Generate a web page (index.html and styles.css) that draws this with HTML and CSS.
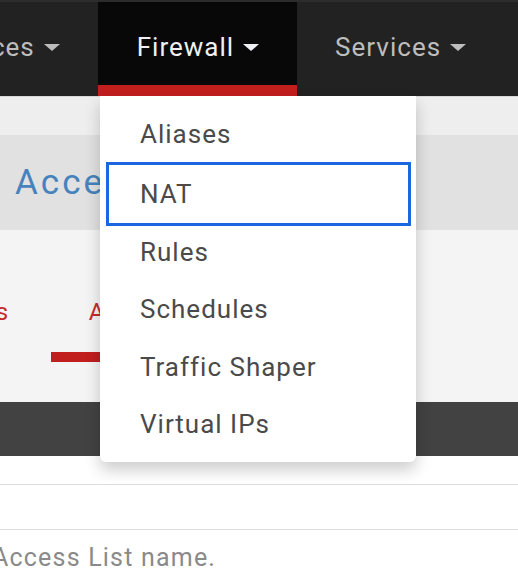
FILE: index.html
```html
<!DOCTYPE html>
<html lang="en">

<head>
    <meta charset="UTF-8">
    <title>Firewall</title>
    <link rel="stylesheet" href="styles.css">
</head>

<body>
    <div id="nav">
        <ul>
            <li class="first"><a href="javascript:;">Interfaces <b class="caret"></b></a></li>
            <li class="active"><a href="javascript:;">Firewall <b class="caret"></b></a></li>
            <li><a href="javascript:;">Services <b class="caret"></b></a></li>
        </ul>
    </div>

    <div id="content">
        <div class="gap"></div>
        <div class="heading">
            <h1>Access Lists</h1>
        </div>
        <div class="tabs">
            <a href="javascript:;" class="tab prev">Settings</a>
            <a href="javascript:;" class="tab current">Access Lists</a>
        </div>
        <div class="bar"></div>
        <div class="row first-row"></div>
        <div class="row"></div>
        <p class="help">Access List name.</p>
    </div>

    <ul id="menu">
        <li class="top"><a href="javascript:;">Aliases</a></li>
        <li class="focus"><a href="javascript:;">NAT</a></li>
        <li><a href="javascript:;">Rules</a></li>
        <li><a href="javascript:;">Schedules</a></li>
        <li><a href="javascript:;">Traffic Shaper</a></li>
        <li><a href="javascript:;">Virtual IPs</a></li>
    </ul>
</body>

</html>
```

FILE: styles.css
```css
* {
    padding: 0;
    margin: 0;
}
li {
    list-style: none;
}
a {
    text-decoration: none;
}
body {
    width: 518px;
    height: 584px;
    overflow: hidden;
    position: relative;
    font-family: Roboto, "Liberation Sans", sans-serif;
    background: #fff;
}
#nav {
    height: 96px;
    background: #222;
    border-top: 2px solid #2c2c2c;
    box-sizing: border-box;
}
#nav ul {
    display: flex;
    height: 100%;
}
#nav li {
    height: 100%;
}
#nav li a {
    display: flex;
    align-items: center;
    height: 100%;
    padding: 0 38px 4px 38px;
    box-sizing: border-box;
    font-size: 26px;
    letter-spacing: 1px;
    color: #bdbdbd;
    white-space: nowrap;
}
#nav li.first a {
    margin-left: -130px;
}
#nav li.active a {
    background: #080808;
    color: #eef0f4;
    border-bottom: 11px solid #c11e1e;
    padding-top: 7px;
    padding-bottom: 0;
    padding-left: 39px;
}
.caret {
    display: inline-block;
    width: 0;
    height: 0;
    margin-left: 9px;
    border-left: 8px solid transparent;
    border-right: 8px solid transparent;
    border-top: 7px solid currentColor;
}
#content {
    background: #f3f3f3;
}
.gap {
    height: 38px;
    background: #eeeeee;
    border-top: 1px solid #d8d8d8;
}
.heading {
    height: 95px;
    background: #e1e1e1;
    display: flex;
    align-items: center;
    padding-left: 15px;
}
.heading h1 {
    font-weight: 400;
    font-size: 35px;
    letter-spacing: 3px;
    color: #4683bd;
    white-space: nowrap;
}
.tabs {
    height: 172px;
    background: #f4f4f4;
    display: flex;
    align-items: flex-start;
    padding-top: 68px;
    box-sizing: border-box;
    margin-left: -121px;
}
.tab {
    font-size: 24px;
    letter-spacing: 0.5px;
    color: #c62b2b;
    padding: 0 38px 26px;
    white-space: nowrap;
}
.tab.prev {
    padding-right: 42px;
}
.tab.current {
    border-bottom: 10px solid #c11e1e;
}
.bar {
    height: 54px;
    background: #424242;
}
.row {
    height: 44px;
    background: #fff;
    border-bottom: 1px solid #dcdcdc;
}
.row.first-row {
    height: 28px;
}
.help {
    background: #fff;
    padding-top: 13px;
    margin-left: -8px;
    font-size: 25px;
    letter-spacing: 1.2px;
    color: #8a8a8a;
    height: 60px;
}
#menu {
    position: absolute;
    left: 100px;
    top: 96px;
    width: 316px;
    padding: 12px 0 9px;
    background: #fff;
    border-radius: 0 0 6px 6px;
    box-shadow: 0 8px 16px rgba(0, 0, 0, 0.2);
}
#menu li {
    position: relative;
}
#menu li a {
    display: flex;
    align-items: center;
    height: 57.5px;
    padding-left: 40px;
    font-size: 26px;
    letter-spacing: 1px;
    color: #4a4a4a;
}
#menu li.top a {
    padding-bottom: 6px;
    box-sizing: border-box;
}
#menu li.focus::after {
    content: "";
    position: absolute;
    left: 6px;
    right: 5px;
    top: -4px;
    bottom: -3px;
    border: 3px solid #1d66e2;
    pointer-events: none;
}
```
